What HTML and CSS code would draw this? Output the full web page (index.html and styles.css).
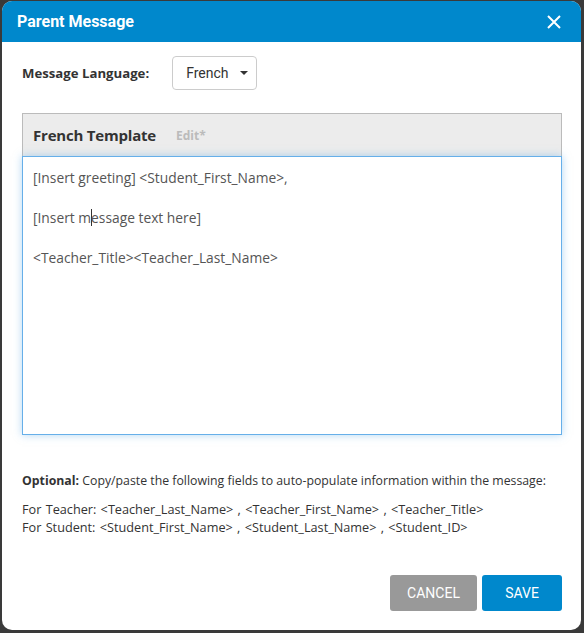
FILE: index.html
```html
<!DOCTYPE html>
<html>
<head>
<meta charset="utf-8">
<link rel="stylesheet" href="styles.css">
</head>
<body>
<div class="dialog">
  <div class="header">
    <span class="title">Parent Message</span>
    <svg class="close" width="16" height="16" viewBox="0 0 16 16"><path d="M2 2L14 14M14 2L2 14" stroke="#fff" stroke-width="2" fill="none"/></svg>
  </div>
  <div class="body">
    <div class="lang-row">
      <span class="lang-label">Message Language:</span>
      <div class="select">French <span class="caret"></span></div>
    </div>
    <div class="panel">
      <div class="panel-head">
        <span class="panel-title">French Template</span>
        <span class="edit">Edit*</span>
      </div>
      <div class="editor">
        <p>[Insert greeting] &lt;Student_First_Name&gt;,</p>
        <p>[Insert m<span class="cursor"></span>essage text here]</p>
        <p>&lt;Teacher_Title&gt;&lt;Teacher_Last_Name&gt;</p>
      </div>
    </div>
    <div class="info">
      <p class="optional"><b>Optional:</b> Copy/paste the following fields to auto-populate information within the message:</p>
      <p class="fields">For Teacher: &lt;Teacher_Last_Name&gt; , &lt;Teacher_First_Name&gt; , &lt;Teacher_Title&gt;<br>For Student: &lt;Student_First_Name&gt; , &lt;Student_Last_Name&gt; , &lt;Student_ID&gt;</p>
    </div>
    <div class="actions">
      <button class="btn cancel">CANCEL</button>
      <button class="btn save">SAVE</button>
    </div>
  </div>
</div>
</body>
</html>
```
FILE: styles.css
```css
html, body {
  margin: 0;
  padding: 0;
  background: #3a3a3a;
}
body {
  width: 584px;
  height: 633px;
  overflow: hidden;
}
.dialog {
  margin: 1px 0 0 2px;
  width: 579px;
  height: 629px;
  background: #fff;
  border-radius: 10px;
  overflow: hidden;
  display: flex;
  flex-direction: column;
}
.header {
  height: 41px;
  background: #0088cc;
  display: flex;
  align-items: center;
  justify-content: space-between;
  padding: 0 19px 0 15px;
}
.title {
  color: #fff;
  font-family: Roboto, sans-serif;
  font-weight: bold;
  font-size: 16px;
}
.close { display: block; }
.body {
  padding: 14px 19px 0 20px;
  display: flex;
  flex-direction: column;
  flex: 1;
}
.lang-row {
  display: flex;
  align-items: center;
  gap: 23px;
  height: 33px;
}
.lang-label {
  font-family: "Open Sans", sans-serif;
  font-weight: bold;
  font-size: 13.2px;
  color: #333;
}
.select {
  box-sizing: border-box;
  height: 34px;
  width: 85px;
  border: 1px solid #ccc;
  border-radius: 4px;
  display: flex;
  align-items: center;
  padding-left: 13px;
  gap: 11px;
  font-family: Roboto, sans-serif;
  font-size: 14px;
  color: #333;
}
.caret {
  width: 0;
  height: 0;
  border-left: 4px solid transparent;
  border-right: 4px solid transparent;
  border-top: 4px solid #333;
}
.panel {
  margin-top: 24px;
  display: flex;
  flex-direction: column;
}
.panel-head {
  box-sizing: border-box;
  height: 43px;
  background: #ececec;
  border: 1px solid #bbb;
  border-bottom: none;
  display: flex;
  align-items: center;
  padding: 0 10px;
  gap: 20px;
}
.panel-title {
  font-family: "Open Sans", sans-serif;
  font-weight: bold;
  font-size: 15px;
  color: #333;
  letter-spacing: -0.2px;
}
.edit {
  font-family: "Open Sans", sans-serif;
  font-weight: bold;
  font-size: 12px;
  color: #bbb;
}
.editor {
  box-sizing: border-box;
  height: 279px;
  border: 1px solid #66afe9;
  box-shadow: 0 0 8px rgba(102, 175, 233, 0.5);
  padding: 11px 10px;
  font-family: "Open Sans", sans-serif;
  font-size: 13.8px;
  color: #555;
}
.editor p {
  margin: 0 0 20px;
  line-height: 20px;
}
.cursor {
  display: inline-block;
  width: 1px;
  height: 17px;
  background: #333;
  vertical-align: -3px;
  margin-right: -1px;
}
.info {
  margin-top: 37px;
  font-family: "Open Sans", sans-serif;
  font-size: 12.3px;
  color: #333;
}
.info p { margin: 0; }
.optional { line-height: 18px; }
.fields {
  margin-top: 10px !important;
  line-height: 18px;
  font-size: 12.7px;
  word-spacing: 1px;
}
.actions {
  margin-top: auto;
  margin-bottom: 19px;
  display: flex;
  justify-content: flex-end;
  gap: 5px;
}
.btn {
  height: 36px;
  border: none;
  border-radius: 3px;
  color: #fff;
  font-family: Roboto, sans-serif;
  font-size: 14px;
}
.cancel { width: 87px; background: #999; }
.save { width: 80px; background: #0088cc; }
```
